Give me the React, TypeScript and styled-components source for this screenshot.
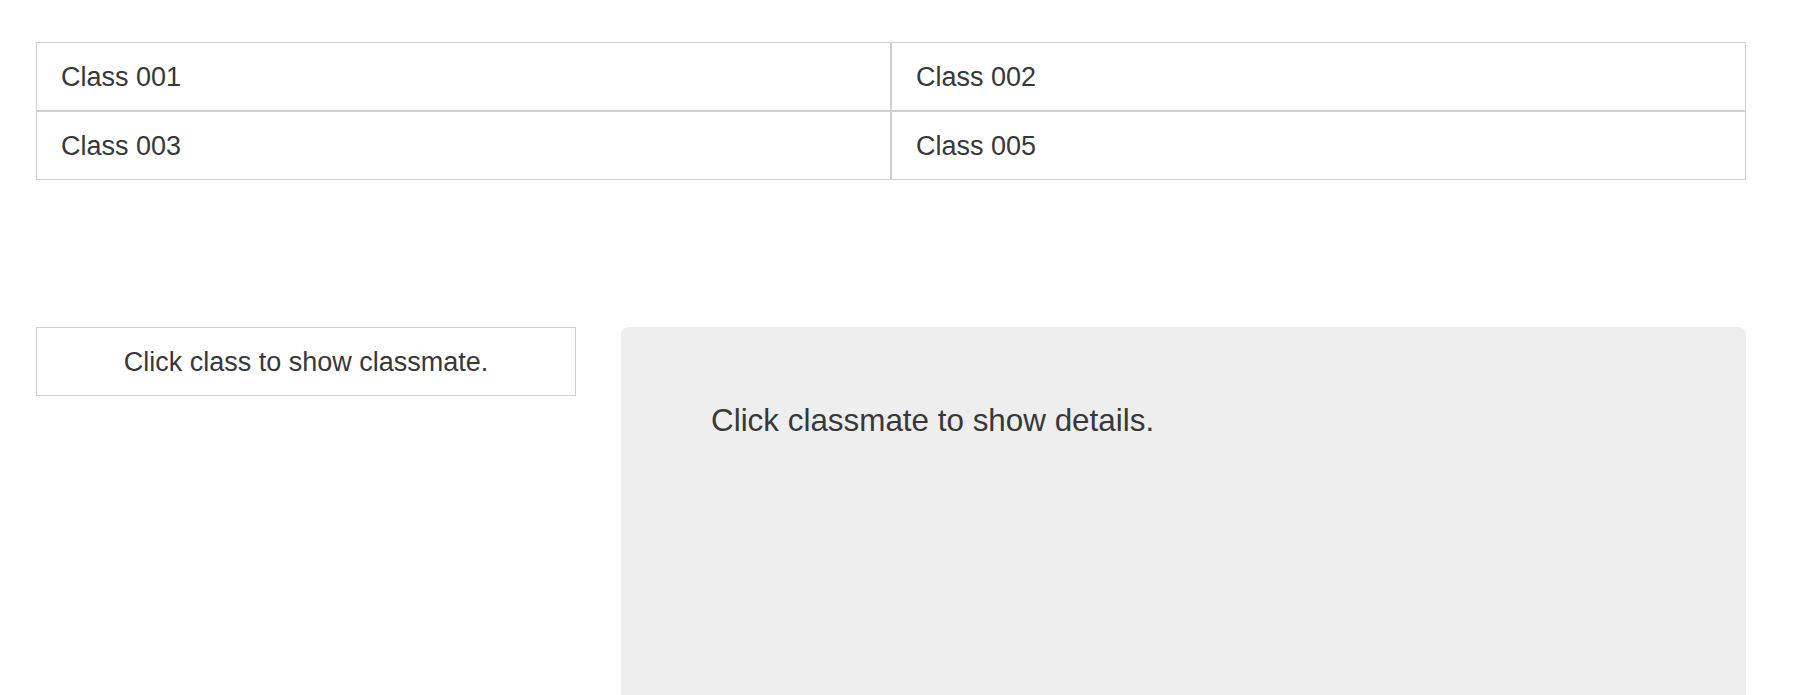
import styled, { createGlobalStyle } from "styled-components";

const classes = ["Class 001", "Class 002", "Class 003", "Class 005"];

export default function App() {
  return (
    <>
      <GlobalStyle />
      <Page>
        <ClassGrid>
          {classes.map((name) => (
            <ClassCell key={name}>{name}</ClassCell>
          ))}
        </ClassGrid>

        <Lower>
          <MateList>
            <HintBox>Click class to show classmate.</HintBox>
          </MateList>
          <DetailPanel>
            <DetailText>Click classmate to show details.</DetailText>
          </DetailPanel>
        </Lower>
      </Page>
    </>
  );
}

/* ===== styled-components ===== */

const GlobalStyle = createGlobalStyle`
  * {
    box-sizing: border-box;
  }

  html, body {
    margin: 0;
    padding: 0;
    background: #ffffff;
    overflow: hidden;
  }

  body {
    font-family: "Liberation Sans", Arial, Helvetica, sans-serif;
    color: #333333;
  }
`;

const Page = styled.div`
  width: 1746px;
  padding: 42px 0 0 36px;
  display: flex;
  flex-direction: column;
  gap: 147px;
`;

const ClassGrid = styled.div`
  display: grid;
  grid-template-columns: 1fr 1fr;
`;

const ClassCell = styled.div`
  height: 69px;
  display: flex;
  align-items: center;
  padding: 2px 24px 0;
  border: 1px solid #d0d0d0;
  font-size: 27px;
  line-height: 1.15;
  color: #383838;
  cursor: pointer;
`;

const Lower = styled.div`
  display: grid;
  grid-template-columns: 540px 1fr;
  gap: 45px;
  align-items: start;
`;

const MateList = styled.div`
  display: flex;
  flex-direction: column;
`;

const HintBox = styled.div`
  height: 69px;
  display: flex;
  align-items: center;
  justify-content: center;
  padding-top: 2px;
  border: 1px solid #d0d0d0;
  font-size: 27px;
  line-height: 1.15;
  color: #383838;
`;

const DetailPanel = styled.div`
  min-height: 420px;
  background-color: #eeeeee;
  border-radius: 8px;
  padding: 76px 90px;
`;

const DetailText = styled.p`
  margin: 0;
  font-size: 31.4px;
  line-height: 1.15;
  color: #383838;
`;
